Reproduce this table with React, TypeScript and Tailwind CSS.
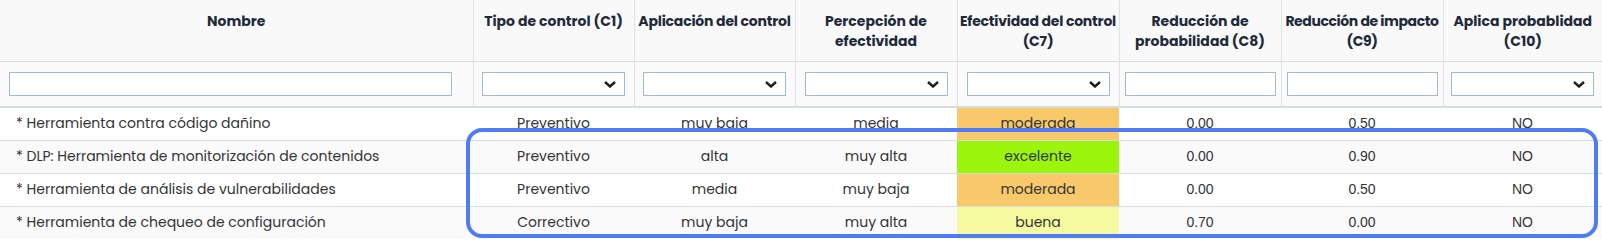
import { ChangeEvent, useState } from 'react'

type Row = {
  nombre: string
  tipo: string
  aplicacion: string
  percepcion: string
  efectividad: 'moderada' | 'excelente' | 'buena'
  probabilidad: string
  impacto: string
  aplica: string
}

const rows: Row[] = [
  {
    nombre: '* Herramienta contra código dañino',
    tipo: 'Preventivo',
    aplicacion: 'muy baja',
    percepcion: 'media',
    efectividad: 'moderada',
    probabilidad: '0.00',
    impacto: '0.50',
    aplica: 'NO',
  },
  {
    nombre: '* DLP: Herramienta de monitorización de contenidos',
    tipo: 'Preventivo',
    aplicacion: 'alta',
    percepcion: 'muy alta',
    efectividad: 'excelente',
    probabilidad: '0.00',
    impacto: '0.90',
    aplica: 'NO',
  },
  {
    nombre: '* Herramienta de análisis de vulnerabilidades',
    tipo: 'Preventivo',
    aplicacion: 'media',
    percepcion: 'muy baja',
    efectividad: 'moderada',
    probabilidad: '0.00',
    impacto: '0.50',
    aplica: 'NO',
  },
  {
    nombre: '* Herramienta de chequeo de configuración',
    tipo: 'Correctivo',
    aplicacion: 'muy baja',
    percepcion: 'muy alta',
    efectividad: 'buena',
    probabilidad: '0.70',
    impacto: '0.00',
    aplica: 'NO',
  },
]

const efectividadBg = {
  moderada: 'bg-[#f8c96b]',
  excelente: 'bg-[#9bf50c]',
  buena: 'bg-[#f6f99f]',
}

function FilterSelect({ width }: { width: string }) {
  const [value, setValue] = useState('')
  return (
    <div className={`relative mx-auto h-6 ${width}`}>
      <select
        value={value}
        onChange={(e: ChangeEvent<HTMLSelectElement>) => setValue(e.target.value)}
        className="h-6 w-full appearance-none border border-[#9dbcdc] bg-white outline-none"
      >
        <option value=""></option>
      </select>
      <svg
        className="pointer-events-none absolute right-[9px] top-[9px]"
        width="12"
        height="7"
        viewBox="0 0 12 7"
        fill="none"
      >
        <path d="M1 1l5 4.5L11 1" stroke="#1b1b1b" strokeWidth="2.4" />
      </svg>
    </div>
  )
}

function FilterInput({ width }: { width: string }) {
  return (
    <input
      type="text"
      className={`block h-6 border border-[#9dbcdc] bg-white outline-none ${width}`}
    />
  )
}

const th =
  'border-r border-[#dde3e3] px-0 pt-[11px] pb-[9px] align-top text-[14px] font-bold leading-5 text-[#1e2a3a] whitespace-nowrap'

export default function App() {
  return (
    <div className="relative w-[1602px] bg-white font-['Poppins','Open_Sans',sans-serif]">
      <table className="w-[1602px] table-fixed border-collapse">
        <colgroup>
          <col className="w-[473px]" />
          <col className="w-[161px]" />
          <col className="w-[161px]" />
          <col className="w-[162px]" />
          <col className="w-[162px]" />
          <col className="w-[162px]" />
          <col className="w-[162px]" />
          <col className="w-[159px]" />
        </colgroup>
        <thead className="bg-[#f9f9f9]">
          <tr className="h-[61px] border-b border-[#d5dddd]">
            <th className={th}>Nombre</th>
            <th className={th}>Tipo de control (C1)</th>
            <th className={`${th} tracking-[-0.2px]`}>Aplicación del control</th>
            <th className={th}>
              Percepción de
              <br />
              efectividad
            </th>
            <th className={`${th} tracking-[-0.2px]`}>
              Efectividad del control
              <br />
              (C7)
            </th>
            <th className={th}>
              Reducción de
              <br />
              probabilidad (C8)
            </th>
            <th className={`${th} tracking-[-0.4px]`}>
              Reducción de impacto
              <br />
              (C9)
            </th>
            <th className="whitespace-nowrap px-0 pt-[11px] pb-[9px] align-top text-[14px] font-bold leading-5 text-[#1e2a3a]">
              Aplica probablidad
              <br />
              (C10)
            </th>
          </tr>
          <tr className="h-[46px] border-b-2 border-[#d5dddd] bg-[#fafafa]">
            <td className="border-r border-[#dde3e3] pl-[9px]">
              <FilterInput width="w-[443px]" />
            </td>
            <td className="border-r border-[#dde3e3]">
              <FilterSelect width="w-[143px]" />
            </td>
            <td className="border-r border-[#dde3e3]">
              <FilterSelect width="w-[143px]" />
            </td>
            <td className="border-r border-[#dde3e3]">
              <FilterSelect width="w-[143px]" />
            </td>
            <td className="border-r border-[#dde3e3]">
              <FilterSelect width="w-[143px]" />
            </td>
            <td className="border-r border-[#dde3e3] pl-[5px]">
              <FilterInput width="w-[151px]" />
            </td>
            <td className="border-r border-[#dde3e3] pl-[5px]">
              <FilterInput width="w-[151px]" />
            </td>
            <td>
              <FilterSelect width="w-[143px]" />
            </td>
          </tr>
        </thead>
        <tbody className="text-[14px] text-[#343434]">
          {rows.map((r, i) => (
            <tr
              key={r.nombre}
              className={`h-[33px] ${i < rows.length - 1 ? 'border-b border-[#d5dddd]' : ''} ${
                i % 2 === 1 ? 'bg-[#fafafa]' : 'bg-white'
              }`}
            >
              <td className="pl-4 text-left">{r.nombre}</td>
              <td className="text-center">{r.tipo}</td>
              <td className="text-center">{r.aplicacion}</td>
              <td className="text-center">{r.percepcion}</td>
              <td className={`text-center ${efectividadBg[r.efectividad]}`}>{r.efectividad}</td>
              <td className="text-center font-['Liberation_Sans',Arial,sans-serif]">{r.probabilidad}</td>
              <td className="text-center font-['Liberation_Sans',Arial,sans-serif]">{r.impacto}</td>
              <td className="text-center font-['Liberation_Sans',Arial,sans-serif]">{r.aplica}</td>
            </tr>
          ))}
        </tbody>
      </table>
      <div className="pointer-events-none absolute left-[466px] top-[128px] h-[110px] w-[1132px] rounded-[16px] border-4 border-[#4f7bf7]" />
    </div>
  )
}
